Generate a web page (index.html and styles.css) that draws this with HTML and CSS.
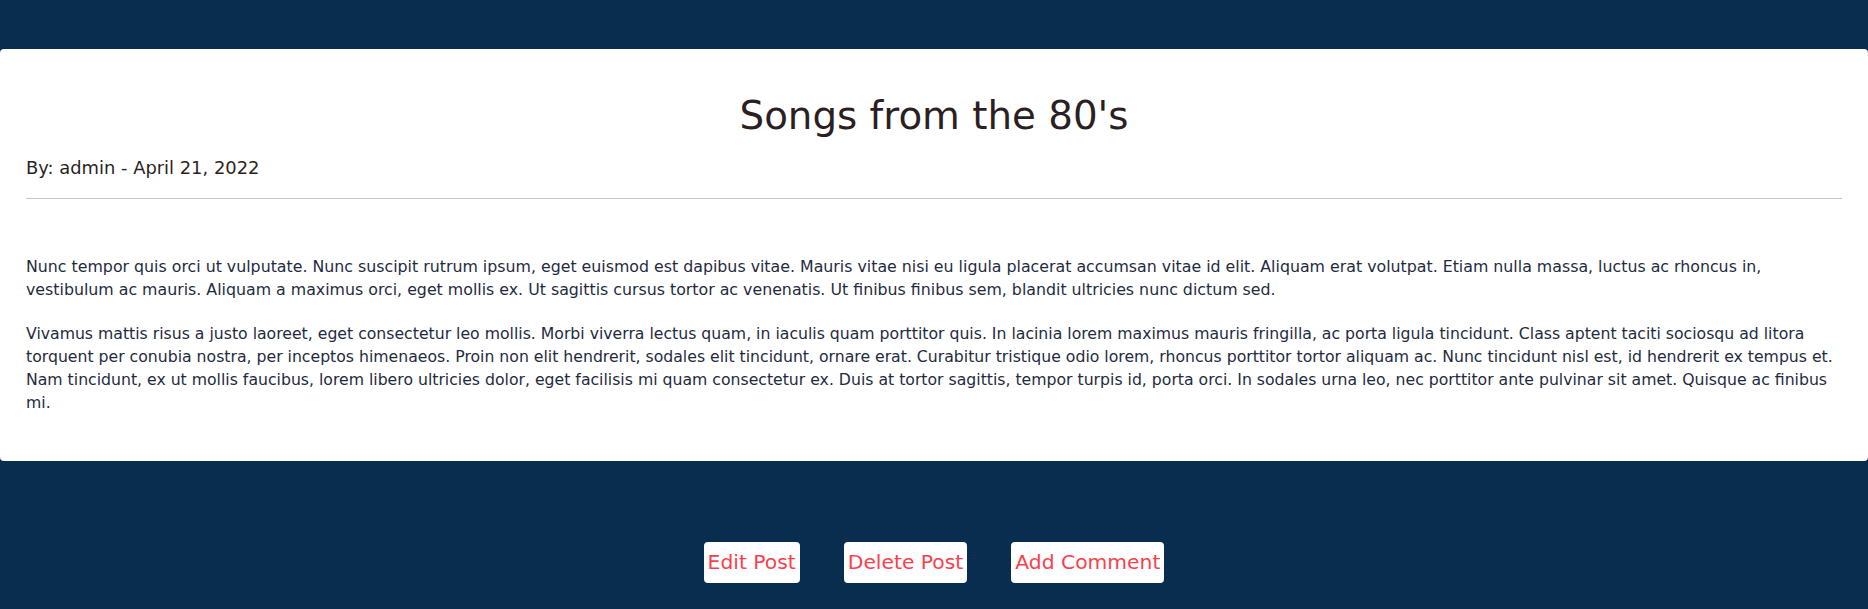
FILE: index.html
```html
<!DOCTYPE html>
<html lang="en">
<head>
<meta charset="utf-8">
<title>Songs from the 80's</title>
<link rel="stylesheet" href="styles.css">
</head>
<body>
<main class="page">
  <article class="post-card">
    <h1 class="post-title">Songs from the 80's</h1>
    <p class="post-meta">By: admin - April 21, 2022</p>
    <hr class="post-rule">
    <div class="post-body">
      <p class="para para-lead">Nunc tempor quis orci ut vulputate. Nunc suscipit rutrum ipsum, eget euismod est dapibus vitae. Mauris vitae nisi eu ligula placerat accumsan vitae id elit. Aliquam erat volutpat. Etiam nulla massa, luctus ac rhoncus in, vestibulum ac mauris. Aliquam a maximus orci, eget mollis ex. Ut sagittis cursus tortor ac venenatis. Ut finibus finibus sem, blandit ultricies nunc dictum sed.</p>
      <p class="para">Vivamus mattis risus a justo laoreet, eget consectetur leo mollis. Morbi viverra lectus quam, in iaculis quam porttitor quis. In lacinia lorem maximus mauris fringilla, ac porta ligula tincidunt. Class aptent taciti sociosqu ad litora torquent per conubia nostra, per inceptos himenaeos. Proin non elit hendrerit, sodales elit tincidunt, ornare erat. Curabitur tristique odio lorem, rhoncus porttitor tortor aliquam ac. Nunc tincidunt nisl est, id hendrerit ex tempus et. Nam tincidunt, ex ut mollis faucibus, lorem libero ultricies dolor, eget facilisis mi quam consectetur ex. Duis at tortor sagittis, tempor turpis id, porta orci. In sodales urna leo, nec porttitor ante pulvinar sit amet. Quisque ac finibus mi.</p>
    </div>
  </article>
  <div class="post-actions">
    <a class="action-btn" href="#">Edit Post</a>
    <a class="action-btn" href="#">Delete Post</a>
    <a class="action-btn" href="#">Add Comment</a>
  </div>
</main>
</body>
</html>
```
FILE: styles.css
```css
html, body {
  margin: 0;
  padding: 0;
  background: #082d4f;
}

body {
  font-family: "DejaVu Sans", "Open Sans", sans-serif;
  min-height: 609px;
}

.page {
  padding-top: 49px;
}

.post-card {
  background: #ffffff;
  border-radius: 4px;
  padding: 24px 26px 26.5px;
}

.post-title {
  margin: 20px 0 0;
  font-size: 38.8px;
  font-weight: 400;
  line-height: 1.2;
  text-align: center;
  color: #2b1f24;
}

.post-meta {
  margin: 14.5px 0 0;
  font-size: 17.9px;
  line-height: 27px;
  color: #2b1f24;
}

.post-rule {
  margin: 16.5px 0 0;
  border: 0;
  border-top: 1px solid #c6c6c6;
  height: 0;
}

.post-body {
  padding-top: 56px;
}

.para {
  margin: 0 0 21px;
  font-size: 15.7px;
  line-height: 23px;
  color: #1f2b40;
}

.para-lead {
  font-size: 15.8px;
}

.post-actions {
  display: flex;
  justify-content: center;
  gap: 44px;
  padding-top: 81px;
}

.action-btn {
  display: block;
  height: 41px;
  line-height: 41px;
  padding: 0 4px;
  background: #ffffff;
  border-radius: 4px;
  color: #fb3f4c;
  font-size: 20.3px;
  text-decoration: none;
  white-space: nowrap;
}
```
